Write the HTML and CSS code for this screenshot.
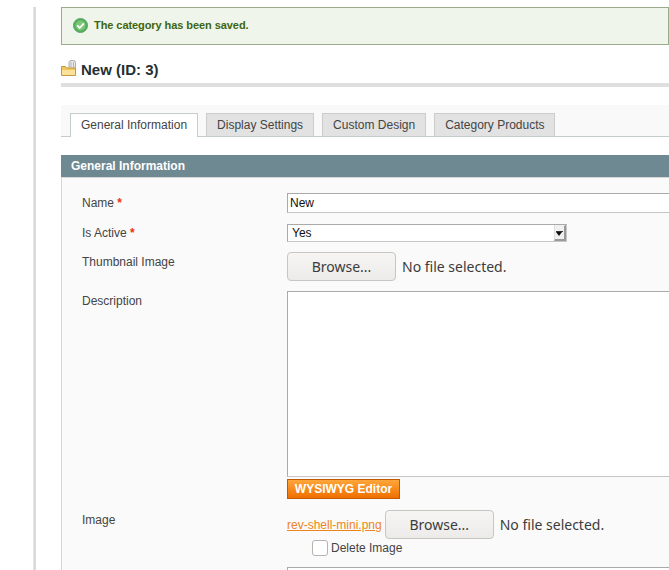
FILE: index.html
```html
<!DOCTYPE html>
<html lang="en">
<head>
    <meta charset="UTF-8">
    <title>New (ID: 3)</title>
    <link rel="stylesheet" href="styles.css">
</head>
<body>

<div class="shell">
    <div class="success-msg">
        <svg class="success-icon" width="15" height="15" viewBox="0 0 15 15">
            <circle cx="7.500" cy="7.500" r="7" fill="#54ad5c" stroke="#5aa767" stroke-width="1"/>
            <circle cx="7.500" cy="7.500" r="5" fill="#7cc777"/>
            <path d="M4.200 7.400l2.500 2.500 4.200-4.600" fill="none" stroke="#fff" stroke-width="1.800"/>
        </svg>
        <span class="success-text">The category has been saved.</span>
    </div>

    <div class="page-title">
        <svg class="title-icon" width="15" height="16" viewBox="0 0 15 16">
            <path d="M8 9V2.500Q8 0.500 10 0.500h2.500Q14.500 0.500 14.500 2.500V9z" fill="#e6e8ea" stroke="#a9aeb2"/>
            <path d="M10 2v7M12.500 2v7" stroke="#b3b8bb"/>
            <path d="M0.500 6.500h4l1 1.500h9v7.500h-14z" fill="#f3c65f" stroke="#c6973c"/>
            <rect x="1" y="10" width="13" height="5" fill="#fbe29a"/>
        </svg>
        <h3>New (ID: 3)</h3>
    </div>

    <div class="tabs-bar">
        <a class="tab active">General Information</a>
        <a class="tab">Display Settings</a>
        <a class="tab">Custom Design</a>
        <a class="tab tab-last">Category Products</a>
    </div>

    <div class="section-head">General Information</div>

    <div class="fieldset">
        <div class="row row-name">
            <label>Name <span class="required">*</span></label>
            <input class="text-input" type="text" value="New">
        </div>
        <div class="row row-active">
            <label>Is Active <span class="required">*</span></label>
            <div class="select-box">
                <span>Yes</span>
                <span class="select-arrow"></span>
            </div>
        </div>
        <div class="row row-thumb">
            <label>Thumbnail Image</label>
            <div class="file-field">
                <span class="browse-btn">Browse...</span>
                <span class="file-status">No file selected.</span>
            </div>
        </div>
        <div class="row row-desc">
            <label>Description</label>
            <div>
                <textarea class="desc-area"></textarea>
                <button class="wysiwyg-btn">WYSIWYG Editor</button>
            </div>
        </div>
        <div class="row row-image">
            <label>Image</label>
            <div>
                <div class="file-field">
                    <a class="file-link">rev-shell-mini.png</a>
                    <span class="browse-btn">Browse...</span>
                    <span class="file-status">No file selected.</span>
                </div>
                <div class="delete-line">
                    <input class="check" type="checkbox">
                    <span>Delete Image</span>
                </div>
            </div>
        </div>
        <div class="row row-next">
            <label></label>
            <div class="next-box"></div>
        </div>
    </div>
</div>

</body>
</html>
```

FILE: styles.css
```css
html, body {
    height: 570px;
    overflow: hidden;
}

body {
    margin: 0;
    box-sizing: border-box;
    background: #fff;
    font-family: "Liberation Sans", Arial, sans-serif;
    font-size: 12px;
    color: #444;
}

/* shell is 570 tall so the page stays inside the frame */
.shell {
    box-sizing: border-box;
    margin: 7px 0 0 33px;
    padding-left: 28px;
    width: 636px;
    height: 563px;
    overflow: hidden;
    background: linear-gradient(90deg, #e8e8e8, #d4d4d4 2px, #e4e4e4 3px, #fff 3px) no-repeat;
}

.success-msg {
    display: flex;
    align-items: center;
    gap: 6px;
    height: 35px;
    padding: 0 0 1px 11px;
    border: 1px solid #9aaa8b;
    background: #eff5ea;
    color: #3d6611;
    font-size: 11px;
    font-weight: bold;
    letter-spacing: -0.07px;
    box-sizing: content-box;
    margin-bottom: -1px;
}

.success-text {
    padding-bottom: 2px;
}

.page-title {
    display: flex;
    align-items: center;
    gap: 5px;
    height: 22px;
    margin-top: 15px;
    padding-bottom: 2px;
    border-bottom: 4px solid #dfdfdf;
}

.page-title h3 {
    margin: 0;
    font-size: 15px;
    line-height: 18px;
    color: #253033;
}

.title-icon {
    margin-top: -5px;
}

.tabs-bar {
    display: flex;
    gap: 8px;
    height: 23px;
    margin-top: 18px;
    padding: 8px 0 0 9px;
    background: #f9f9f9;
    border-bottom: 1px solid #c4cccc;
}

.tab {
    height: 22px;
    padding: 0 10px;
    border: 1px solid #ccc;
    border-bottom: 0;
    background: #e2e2e2;
    line-height: 23px;
    color: #444;
}

.tab.active {
    height: 23px;
    background: #fff;
    border-color: #c4cccc;
}

.tab-last {
    padding-right: 9px;
}

.section-head {
    height: 22px;
    margin-top: 18px;
    padding-left: 10px;
    background: #6f8992;
    color: #fff;
    font-weight: bold;
    line-height: 22px;
}

.fieldset {
    height: 420px;
    padding-left: 20px;
    border-top: 1px solid #d6d6d6;
    border-left: 1px solid #d6d6d6;
    background: #fafafa;
}

.row {
    display: grid;
    grid-template-columns: 205px 1fr;
}

.row label {
    line-height: 14px;
}

.required {
    color: #eb340a;
    font-weight: bold;
}

.row-name {
    padding-top: 15px;
}

.row-name label {
    padding-top: 3px;
}

.text-input {
    box-sizing: border-box;
    display: block;
    width: 400px;
    height: 20px;
    padding: 0 2px;
    border: 1px solid;
    border-color: #aaa #c6c6c6 #c6c6c6 #aaa;
    background: #fff;
    font: 12px "Liberation Sans", Arial, sans-serif;
    color: #111;
}

.row-active {
    padding-top: 11px;
}

.row-active label {
    padding-top: 2px;
}

.select-box {
    box-sizing: border-box;
    display: flex;
    justify-content: space-between;
    align-items: center;
    width: 280px;
    height: 18px;
    padding-left: 4px;
    border: 1px solid;
    border-color: #aaa #c6c6c6 #c6c6c6 #aaa;
    background: #fff;
    color: #111;
}

.select-arrow {
    position: relative;
    box-sizing: border-box;
    width: 12px;
    height: 16px;
    background: #f0f0f0;
    border-right: 2px solid #9a9a9a;
    border-bottom: 2px solid #9a9a9a;
    border-left: 1px solid #ddd;
    border-top: 1px solid #eee;
}

.select-arrow::before {
    content: "";
    position: absolute;
    left: 1px;
    top: 5px;
    width: 7px;
    height: 1px;
    background: #333;
}

.select-arrow::after {
    content: "";
    position: absolute;
    left: 1px;
    top: 6px;
    border-top: 4px solid #111;
    border-left: 3.5px solid transparent;
    border-right: 3.5px solid transparent;
}

.row-thumb {
    padding-top: 10px;
}

.row-thumb label {
    padding-top: 3px;
}

.file-field {
    display: flex;
    align-items: center;
    gap: 6px;
}

.browse-btn {
    box-sizing: border-box;
    width: 109px;
    height: 29px;
    border: 1px solid #c8c6c2;
    border-radius: 4px;
    background: linear-gradient(#f6f5f4, #ecebe9);
    font: 14px/27px "Noto Sans", sans-serif;
    text-align: center;
    color: #3c3c3c;
}

.file-status {
    font: 14px "Noto Sans", sans-serif;
    color: #3c3c3c;
}

.row-desc {
    padding-top: 10px;
}

.row-desc label {
    padding-top: 3px;
}

.desc-area {
    box-sizing: border-box;
    display: block;
    width: 400px;
    height: 186px;
    margin: 0;
    padding: 2px;
    border: 1px solid;
    border-color: #aaa #c6c6c6 #c6c6c6 #aaa;
    background: #fff;
    resize: none;
}

.wysiwyg-btn {
    display: block;
    box-sizing: border-box;
    width: 113px;
    height: 20px;
    margin-top: 2px;
    padding: 0;
    border: 1px solid #bf5a00;
    background: linear-gradient(#ffa63a, #f06f00);
    font: bold 12px "Liberation Sans", Arial, sans-serif;
    color: #fff;
}

.row-image {
    padding-top: 11px;
}

.row-image label {
    padding-top: 3px;
}

.row-image .file-field {
    gap: 3px;
}

.row-image .file-status {
    margin-left: 3px;
}

.file-link {
    color: #ee8420;
    text-decoration: underline;
}

.delete-line {
    display: flex;
    align-items: center;
    gap: 3px;
    margin-top: 1px;
    padding-left: 25px;
}

.check {
    appearance: none;
    box-sizing: border-box;
    width: 16px;
    height: 16px;
    margin: 0;
    border: 1px solid #b5b3ae;
    border-radius: 3px;
    background: #fff;
}

.row-next {
    padding-top: 11px;
}

.next-box {
    width: 400px;
    height: 30px;
    border: 1px solid #aaa;
    background: #fff;
}
```
